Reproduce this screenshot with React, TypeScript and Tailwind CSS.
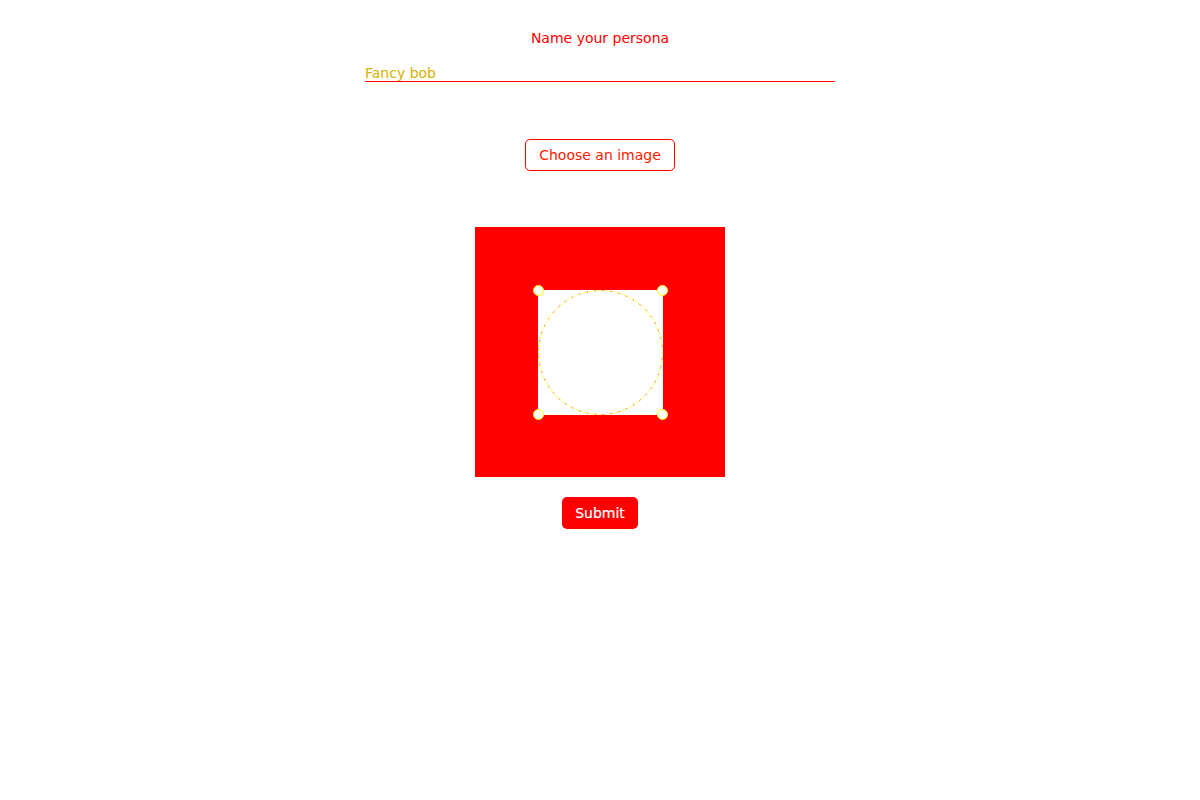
import { useState } from 'react'

const FONT = { fontFamily: '"DejaVu Sans", Verdana, sans-serif' }

export default function App() {
  const [name, setName] = useState('Fancy bob')

  return (
    <div className="min-h-screen bg-white" style={FONT}>
      <div className="mx-auto flex w-[470px] flex-col items-center pt-[28px]">
        <label
          htmlFor="persona-name"
          className="text-[14px] leading-5 text-[#ff0000]"
        >
          Name your persona
        </label>

        <input
          id="persona-name"
          value={name}
          onChange={(e) => setName(e.target.value)}
          className="mt-[15px] h-[19px] w-full border-b border-[#ff0000] bg-transparent p-0 pt-[2px] text-[14px] leading-[17px] text-[#d8b000] outline-none"
        />

        <button className="mt-[57px] h-[32px] w-[150px] rounded-[5px] border border-[#ff0000] text-[14px] text-[#ff2000]">
          Choose an image
        </button>

        <CropArea />

        <button className="mt-[20px] h-[32px] w-[76px] rounded-[5px] bg-[#ff0000] text-[14px] font-medium text-white [-webkit-text-stroke:0.2px_#ffffff]">
          Submit
        </button>
      </div>
    </div>
  )
}

// red preview with the square crop selection in the middle
function CropArea() {
  return (
    <div className="mt-[56px] flex h-[250px] w-[250px] items-center justify-center bg-[#ff0000] pl-px pt-px">
      <div className="relative h-[125px] w-[125px] bg-white">
        <svg viewBox="0 0 125 125" className="absolute inset-0 h-full w-full">
          <circle
            cx="62.5"
            cy="62.5"
            r="62"
            fill="none"
            stroke="#ffff00"
            strokeWidth="1"
            strokeDasharray="2 2"
          />
          <circle
            cx="62.5"
            cy="62.5"
            r="62"
            fill="none"
            stroke="#ff0000"
            strokeWidth="1"
            strokeDasharray="1 7"
            strokeDashoffset="2"
          />
        </svg>
        <Handle className="-left-[5px] -top-[5px]" />
        <Handle className="-right-[5px] -top-[5px]" />
        <Handle className="-bottom-[5px] -left-[5px]" />
        <Handle className="-bottom-[5px] -right-[5px]" />
      </div>
    </div>
  )
}

function Handle({ className }: { className: string }) {
  return (
    <span
      className={`absolute h-[11px] w-[11px] rounded-full border-[1.5px] border-[#ffff00] bg-white ${className}`}
    />
  )
}
